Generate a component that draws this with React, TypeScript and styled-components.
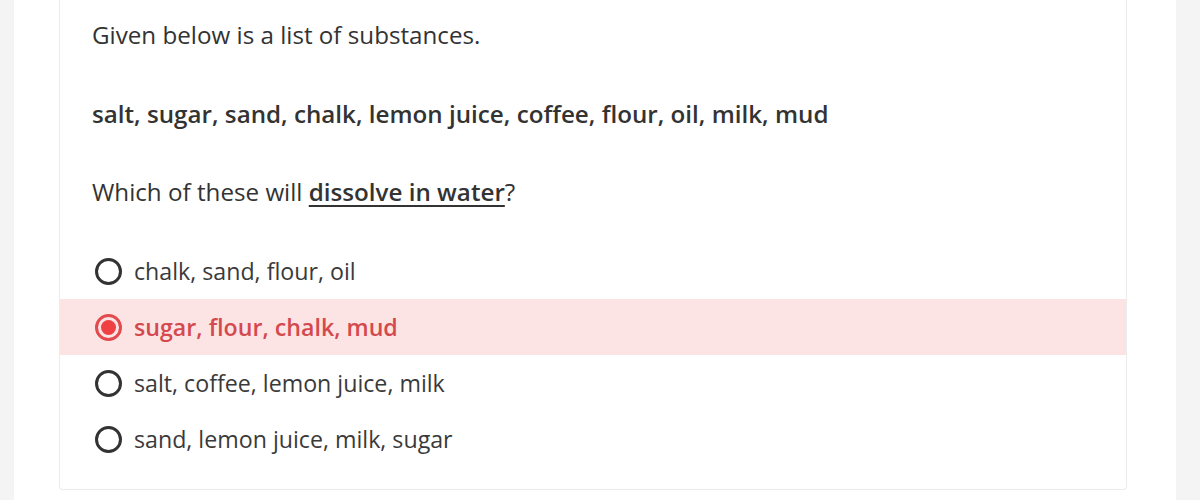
import React from "react"
import styled, { createGlobalStyle } from "styled-components"

const GlobalStyle = createGlobalStyle`
  html, body {
    margin: 0;
    padding: 0;
    background: #f4f4f4;
  }
  body {
    font-family: "Open Sans", "Noto Sans", sans-serif;
    color: #333333;
  }
`

const Page = styled.div`
  margin: 0 24px 0 14px;
  padding: 0 49px 10px 45px;
  background: #ffffff;
  height: 500px;
  box-sizing: border-box;
  overflow: hidden;
`

const Card = styled.div`
  border: 1px solid #ececec;
  border-top: none;
  border-radius: 0 0 4px 4px;
  padding: 20px 0 22px;
  background: #ffffff;
`

const Paragraph = styled.p<{ $bold?: boolean; $gap?: number }>`
  margin: 0 0 ${({ $gap = 48 }) => $gap}px;
  padding: 0 32px;
  font-size: 24.2px;
  line-height: 30px;
  font-weight: ${({ $bold }) => ($bold ? 600 : 400)};
  color: #333333;
`

const Emphasis = styled.span`
  font-weight: 600;
  text-decoration: underline;
  text-underline-offset: 4px;
  text-decoration-thickness: 2px;
`

const OptionList = styled.div`
  display: flex;
  flex-direction: column;
`

const OptionRow = styled.label<{ $selected?: boolean }>`
  display: flex;
  align-items: center;
  gap: 12px;
  height: 56px;
  padding: 0 0 0 35px;
  background: ${({ $selected }) => ($selected ? "#fde4e4" : "transparent")};
  color: ${({ $selected }) => ($selected ? "#d4494e" : "#3a3a3a")};
  font-size: 23.2px;
  font-weight: ${({ $selected }) => ($selected ? 600 : 400)};
  cursor: pointer;
`

const Radio = styled.span<{ $selected?: boolean }>`
  position: relative;
  width: 27px;
  height: 27px;
  box-sizing: border-box;
  border-radius: 50%;
  border: 3px solid ${({ $selected }) => ($selected ? "#e24a4d" : "#333333")};
  flex-shrink: 0;

  &::after {
    content: "";
    display: ${({ $selected }) => ($selected ? "block" : "none")};
    position: absolute;
    top: 3px;
    left: 3px;
    width: 15px;
    height: 15px;
    border-radius: 50%;
    background: #ef4044;
  }
`

const options = [
  "chalk, sand, flour, oil",
  "sugar, flour, chalk, mud",
  "salt, coffee, lemon juice, milk",
  "sand, lemon juice, milk, sugar",
]

export default function App() {
  const selected = 1
  return (
    <>
      <GlobalStyle />
      <Page>
        <Card>
          <Paragraph $gap={49}>Given below is a list of substances.</Paragraph>
          <Paragraph $bold>salt, sugar, sand, chalk, lemon juice, coffee, flour, oil, milk, mud</Paragraph>
          <Paragraph $gap={36}>
            Which of these will <Emphasis>dissolve in water</Emphasis>?
          </Paragraph>
          <OptionList>
            {options.map((text, i) => (
              <OptionRow key={text} $selected={i === selected}>
                <Radio $selected={i === selected} />
                {text}
              </OptionRow>
            ))}
          </OptionList>
        </Card>
      </Page>
    </>
  )
}
